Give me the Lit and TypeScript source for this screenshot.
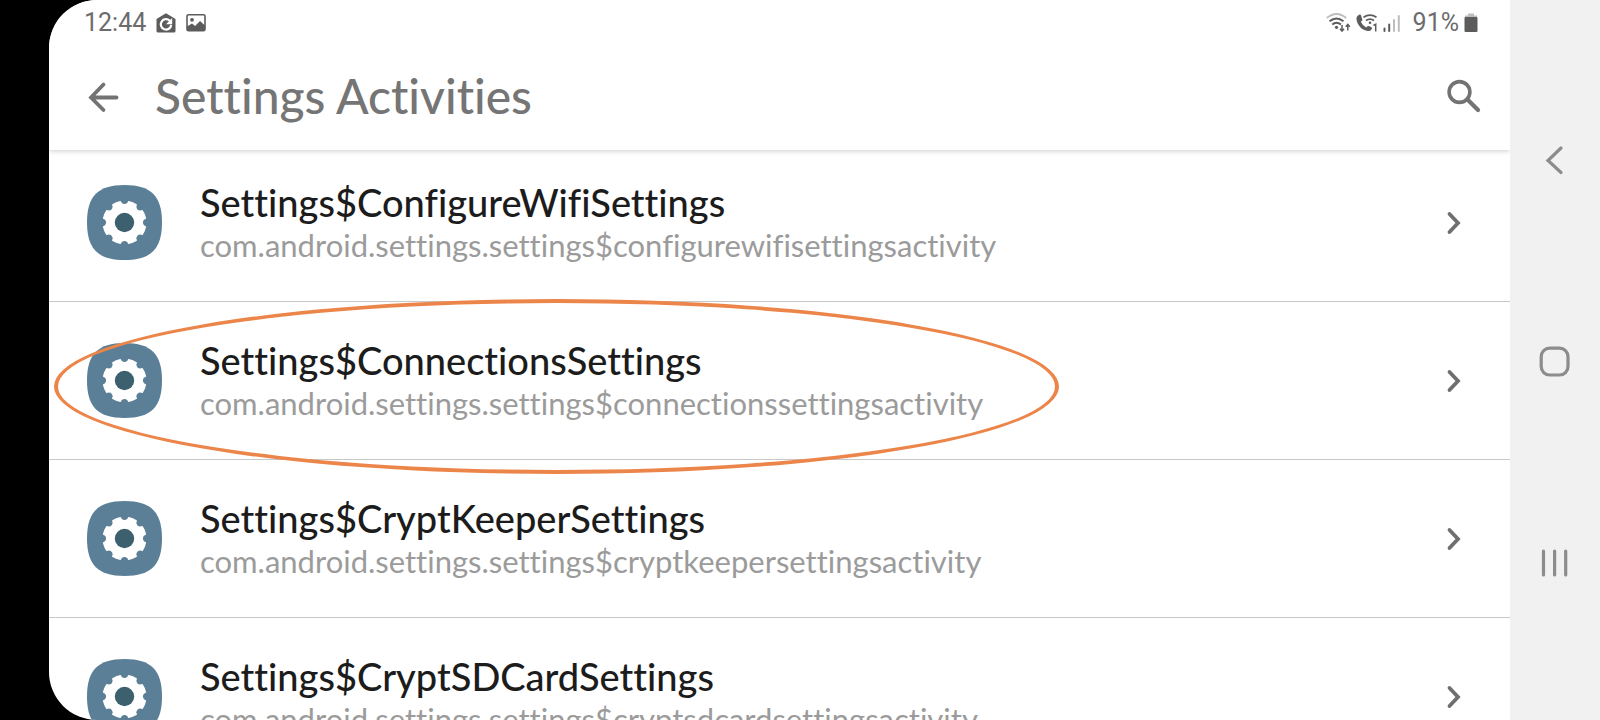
import { LitElement, html, svg, css } from "lit";
import { customElement, property } from "lit/decorators.js";

interface Activity {
  name: string;
  path: string;
  marked?: boolean;
}

const ACTIVITIES: Activity[] = [
  { name: "Settings$ConfigureWifiSettings", path: "com.android.settings.settings$configurewifisettingsactivity" },
  { name: "Settings$ConnectionsSettings", path: "com.android.settings.settings$connectionssettingsactivity", marked: true },
  { name: "Settings$CryptKeeperSettings", path: "com.android.settings.settings$cryptkeepersettingsactivity" },
  { name: "Settings$CryptSDCardSettings", path: "com.android.settings.settings$cryptsdcardsettingsactivity" },
];

const NOTCHES = [0, 45, 90, 135, 180, 225, 270, 315];

@customElement("status-bar")
class StatusBar extends LitElement {
  static styles = css`
    :host {
      display: flex;
      justify-content: space-between;
      align-items: center;
      height: 44px;
      padding: 2px 32px 0 35px;
      box-sizing: border-box;
      font: 400 25px/42px Roboto, sans-serif;
      color: #6c6c6c;
    }
    .group {
      display: flex;
      align-items: center;
    }
    .left {
      gap: 10px;
    }
    .right {
      gap: 5px;
    }
    .percent {
      margin-left: 8px;
    }
    svg {
      display: block;
    }
  `;

  render() {
    return html`
      <div class="group left">
        <span>12:44</span>
        <svg width="20" height="20" viewBox="0 0 20 20" aria-hidden="true">
          <path d="M.5 6 10 .3l9.500 5.700V18q0 1.500-1.500 1.500H2Q.5 19.500.5 18Z" fill="#5c5c5c" />
          <path d="M13.800 7.800A5.200 5.200 0 1 0 15.200 11.800" fill="none" stroke="#fff" stroke-width="2.200" />
          <path d="M16.200 5v6.200H10Z" fill="#fff" />
        </svg>
        <svg width="20" height="20" viewBox="0 0 20 20" aria-hidden="true">
          <rect x="1" y="1.800" width="18" height="16" rx="1.500" fill="none" stroke="#5c5c5c" stroke-width="1.600" />
          <circle cx="6" cy="6.800" r="1.900" fill="#5c5c5c" />
          <path d="M1 13.500 6 10.500l3 2.500 5-5 5 4.500V18H1Z" fill="#5c5c5c" />
        </svg>
      </div>
      <div class="group right">
        <svg width="25" height="20" viewBox="0 0 25 20" fill="none" aria-hidden="true">
          <path d="M.8 5Q10.500-3 20.200 5" stroke="#bdbdbd" stroke-width="1.800" />
          <path d="M3.500 8.300Q10.500 2.500 17.500 8.300M6.200 11.500Q10.500 8 15 11.500" stroke="#5c5c5c" stroke-width="1.900" />
          <circle cx="10.500" cy="14.300" r="1.600" fill="#5c5c5c" />
          <path d="M16 12v6M14 15.800l2 2.400 2-2.400M21.800 17.500v-6M19.800 13.700l2-2.400 2 2.400" stroke="#5c5c5c" stroke-width="1.500" />
        </svg>
        <svg width="22" height="20" viewBox="0 0 22 20" fill="none" aria-hidden="true">
          <path d="M3.500 1.500Q0 3 .5 6.500C1.500 12.500 6 17.300 12 18q3.200.2 4-2.500.2-1-.8-1.500l-2.700-1q-.8-.3-1.400.4l-.9 1Q6.500 12.500 4.800 8.800L6 7.700q.6-.5.3-1.300L5 2.200q-.4-1-1.500-.7Z" fill="#5c5c5c" />
          <path d="M7.500 4.200Q14 .2 20.500 4.200M10 7.500q4-2.800 8 0" stroke="#5c5c5c" stroke-width="1.800" />
          <circle cx="14" cy="9.800" r="1.300" fill="#5c5c5c" />
          <path d="m17.500 12.500 2.200-1.300V18.500" stroke="#5c5c5c" stroke-width="1.500" />
        </svg>
        <svg width="17" height="20" viewBox="0 0 17 20" fill="none" stroke-width="2" stroke-linecap="round" aria-hidden="true">
          <path d="M1.500 15.500V18M6.200 11.500V18" stroke="#5c5c5c" />
          <path d="M11 7v11M15.800 3v15" stroke="#bdbdbd" />
        </svg>
        <span class="percent">91%</span>
        <svg width="14" height="20" viewBox="0 0 14 20" aria-hidden="true">
          <path d="M4 .5h6v2h3v2H1v-2h3Z" fill="#bdbdbd" />
          <rect x=".5" y="4" width="13" height="15" rx="1" fill="#5c5c5c" />
        </svg>
      </div>
    `;
  }
}

@customElement("activity-row")
class ActivityRow extends LitElement {
  @property({ attribute: false }) item!: Activity;

  static styles = css`
    :host {
      display: block;
      position: relative;
      border-bottom: 1px solid #c8c8c8;
    }
    .link {
      display: flex;
      align-items: center;
      height: 157px;
      padding: 0 49px 0 38px;
      box-sizing: border-box;
      color: inherit;
      text-decoration: none;
    }
    .texts {
      display: flex;
      flex-direction: column;
      flex: 1;
      min-width: 0;
      margin-left: 38px;
      white-space: nowrap;
    }
    .name {
      font-size: 38px;
      font-weight: 500;
      line-height: 44px;
      color: #1c1c1c;
    }
    .path {
      font-size: 31px;
      line-height: 42px;
      color: #9b9b9b;
    }
    .icon,
    .chevron {
      display: block;
      flex: none;
    }
    .mark {
      position: absolute;
      top: -3px;
      left: 5px;
      width: 1005px;
      height: 175px;
      box-sizing: border-box;
      border: 4px solid #ec8549;
      border-radius: 50%;
      pointer-events: none;
      z-index: 1;
    }
  `;

  render() {
    return html`
      <a class="link" href="#${this.item.path}">
        <svg class="icon" width="75" height="75" viewBox="0 0 75 75" aria-hidden="true">
          <path d="M37.500 0C64 0 75 11 75 37.500S64 75 37.500 75 0 64 0 37.500 11 0 37.500 0Z" fill="#5b7f97" />
          <circle cx="37.500" cy="37.500" r="22" fill="#fff" />
          ${NOTCHES.map((a) => svg`<path d="M32.800 14.500 34.800 18Q37.500 20.200 40.200 18L42.200 14.500Z" fill="#5b7f97" transform="rotate(${a} 37.5 37.5)" />`)}
          <circle cx="37.500" cy="37.500" r="9.700" fill="#3d606f" />
        </svg>
        <span class="texts">
          <span class="name">${this.item.name}</span>
          <span class="path">${this.item.path}</span>
        </span>
        <svg class="chevron" width="16" height="24" viewBox="0 0 16 24" fill="none" aria-hidden="true">
          <path d="m4.500 3 8.500 9-8.500 9" stroke="#6f6f6f" stroke-width="3.800" stroke-linecap="round" />
        </svg>
      </a>
      ${this.item.marked ? html`<div class="mark"></div>` : null}
    `;
  }
}

@customElement("nav-keys")
class NavKeys extends LitElement {
  static styles = css`
    :host {
      display: flex;
      flex-direction: column;
      width: 90px;
      padding: 60px 0 56px;
      box-sizing: border-box;
      background: #f1f1f1;
    }
    .key {
      flex: 1;
      display: grid;
      place-items: center;
      padding: 0;
      border: 0;
      background: none;
      cursor: pointer;
    }
    svg {
      display: block;
      fill: none;
      stroke: #8c8c8c;
      stroke-width: 3.200;
      stroke-linecap: round;
    }
  `;

  render() {
    return html`
      <button class="key" aria-label="Back">
        <svg width="32" height="32" viewBox="0 0 32 32"><path d="M22 3 9 15.500l13 12" /></svg>
      </button>
      <button class="key" aria-label="Home">
        <svg width="32" height="32" viewBox="0 0 32 32"><rect x="2.200" y="2.200" width="26.800" height="26.800" rx="8.500" /></svg>
      </button>
      <button class="key" aria-label="Recent apps">
        <svg width="32" height="32" viewBox="0 0 32 32"><path d="M4.500 4v24M15.600 4v24M26.700 4v24" /></svg>
      </button>
    `;
  }
}

@customElement("app-root")
class AppRoot extends LitElement {
  static styles = css`
    :host {
      display: flex;
      height: 100vh;
      overflow: hidden;
      padding-left: 49px;
      box-sizing: border-box;
      background: #000;
      font-family: Lato, sans-serif;
      font-variant-ligatures: none;
    }
    .screen {
      flex: 1;
      min-width: 0;
      display: flex;
      flex-direction: column;
      overflow: hidden;
      background: #fff;
      border-radius: 48px 0 0 48px;
    }
    .header {
      flex: none;
      position: relative;
      z-index: 2;
      background: #fff;
      box-shadow: 0 1px 5px rgba(0, 0, 0, 0.2);
    }
    .toolbar {
      display: flex;
      align-items: center;
      height: 106px;
      padding: 0 28px 0 36px;
      box-sizing: border-box;
    }
    .title {
      flex: 1;
      margin: 0 0 0 34px;
      padding-bottom: 2px;
      font-size: 48px;
      font-weight: 500;
      line-height: 56px;
      color: #757575;
    }
    .tool {
      padding: 0;
      border: 0;
      background: none;
      cursor: pointer;
    }
    .tool svg {
      display: block;
      fill: none;
      stroke: #737373;
      stroke-linecap: round;
    }
    .list {
      list-style: none;
      margin: -6px 0 0;
      padding: 0;
    }
  `;

  render() {
    return html`
      <main class="screen">
        <header class="header">
          <status-bar></status-bar>
          <div class="toolbar">
            <button class="tool" aria-label="Navigate up">
              <svg width="36" height="36" viewBox="0 0 36 36" stroke-width="3.800"><path d="M18.500 5.500 6 18.500l12.500 12.500M6.500 18.500H31.500" /></svg>
            </button>
            <h1 class="title">Settings Activities</h1>
            <button class="tool" aria-label="Search">
              <svg width="36" height="36" viewBox="0 0 36 36"><circle cx="13.500" cy="13" r="10.400" stroke-width="3.600" /><path d="m22 21 10 10" stroke-width="4.200" /></svg>
            </button>
          </div>
        </header>
        <ul class="list">
          ${ACTIVITIES.map((item) => html`<li><activity-row .item=${item}></activity-row></li>`)}
        </ul>
      </main>
      <nav-keys></nav-keys>
    `;
  }
}
